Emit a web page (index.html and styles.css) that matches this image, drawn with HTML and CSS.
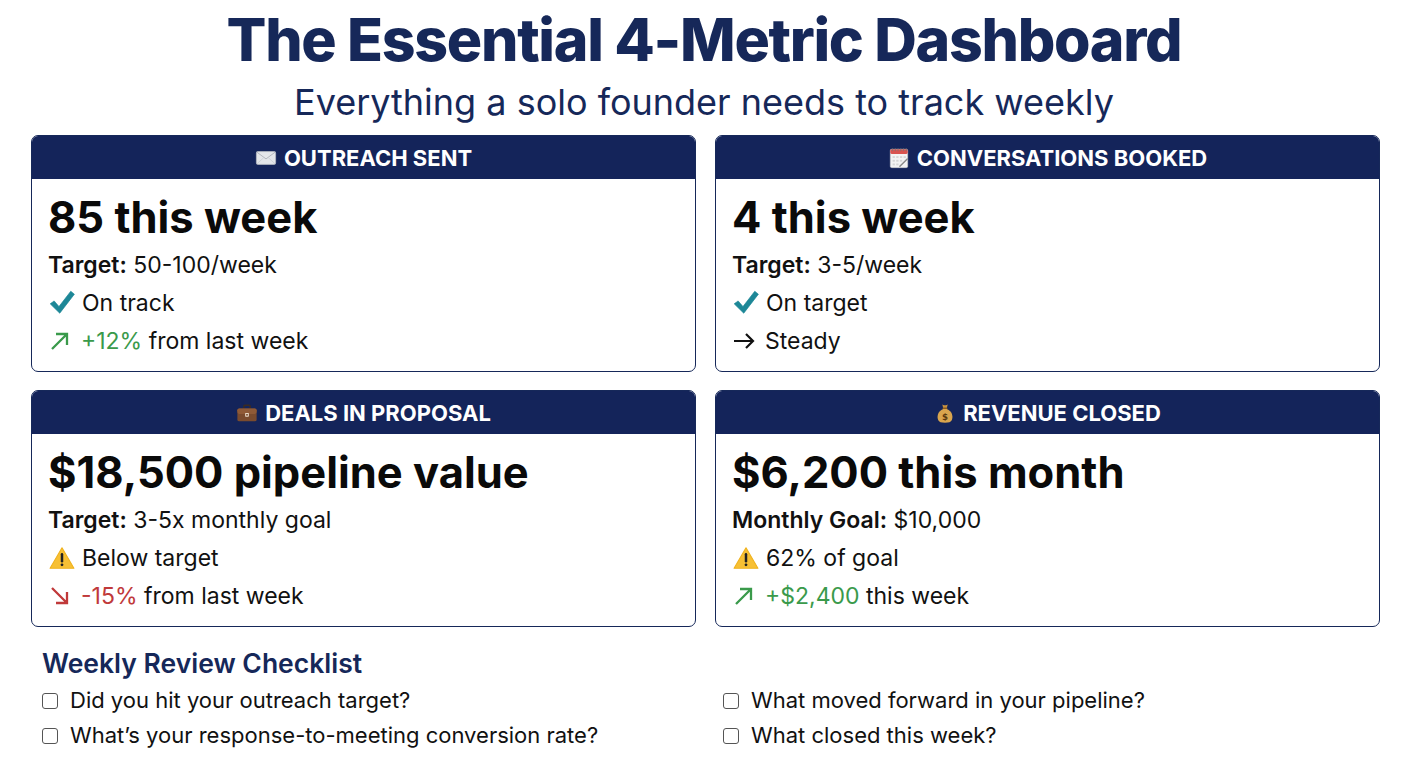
FILE: index.html
```html
<!DOCTYPE html>
<html lang="en">
<head>
<meta charset="utf-8">
<title>The Essential 4-Metric Dashboard</title>
<link rel="stylesheet" href="styles.css">
</head>
<body>
<header class="intro">
  <h1 class="title">The Essential 4-Metric Dashboard</h1>
  <p class="subtitle">Everything a solo founder needs to track weekly</p>
</header>
<main class="page">
  <section class="grid">
    <article class="card">
      <div class="card-head">
        <svg class="emo" viewBox="0 0 24 24" aria-hidden="true"><rect x="1.5" y="5" width="21" height="14" rx="1.5" fill="#e4e6ea" stroke="#b9bdc4" stroke-width="0.8"/><path d="M2 5.6 L12 13 L22 5.6" fill="none" stroke="#a9adb5" stroke-width="0.9"/><path d="M2 18.5 L9.5 11.6 M22 18.5 L14.5 11.6" fill="none" stroke="#c4c8ce" stroke-width="0.7"/></svg>
        <span>OUTREACH SENT</span>
      </div>
      <div class="card-body">
        <div class="value">85 this week</div>
        <div class="line"><b>Target:</b> 50-100/week</div>
        <div class="line"><svg class="ico check" viewBox="0 0 24 24" aria-hidden="true"><path d="M1.5 13.2 L5 10.6 L9.3 15.6 L19.8 2 L23 4.6 L10 21.5 Z" fill="#1d8797" stroke="#1d8797" stroke-width="0.6" stroke-linejoin="round"/></svg>On track</div>
        <div class="line"><svg class="ico arrow" viewBox="0 0 24 24" aria-hidden="true"><path d="M4 20 L19 5 M8 5 H19 V16" fill="none" stroke="#3a9a4b" stroke-width="2.3"/></svg><span class="up">+12%</span> from last week</div>
      </div>
    </article>
    <article class="card">
      <div class="card-head">
        <svg class="emo" viewBox="0 0 24 24" aria-hidden="true"><rect x="2.5" y="2.5" width="19" height="20" rx="1.5" fill="#f3f3f3" stroke="#c9c9c9" stroke-width="0.6"/><rect x="2.5" y="2.5" width="19" height="5" rx="1.5" fill="#d9534f"/><g stroke="#777" stroke-width="0.9"><path d="M5 1.5v3M8 1.5v3M11 1.5v3M14 1.5v3M17 1.5v3M20 1.5v3"/></g><g fill="#d6d6d6"><rect x="5" y="10" width="2.5" height="2"/><rect x="9" y="10" width="2.5" height="2"/><rect x="13" y="10" width="2.5" height="2"/><rect x="17" y="10" width="2.5" height="2"/><rect x="5" y="14" width="2.5" height="2"/><rect x="9" y="14" width="2.5" height="2"/><rect x="13" y="14" width="2.5" height="2"/><rect x="5" y="18" width="2.5" height="2"/><rect x="9" y="18" width="2.5" height="2"/></g><path d="M13 21 L21 13" stroke="#8a8a8a" stroke-width="1.6" stroke-linecap="round"/></svg>
        <span>CONVERSATIONS BOOKED</span>
      </div>
      <div class="card-body">
        <div class="value">4 this week</div>
        <div class="line"><b>Target:</b> 3-5/week</div>
        <div class="line"><svg class="ico check" viewBox="0 0 24 24" aria-hidden="true"><path d="M1.5 13.2 L5 10.6 L9.3 15.6 L19.8 2 L23 4.6 L10 21.5 Z" fill="#1d8797" stroke="#1d8797" stroke-width="0.6" stroke-linejoin="round"/></svg>On target</div>
        <div class="line"><svg class="ico arrow" viewBox="0 0 24 24" aria-hidden="true"><path d="M2 12 H21 M14 5 L21 12 L14 19" fill="none" stroke="#111" stroke-width="2.2"/></svg>Steady</div>
      </div>
    </article>
    <article class="card">
      <div class="card-head">
        <svg class="emo" viewBox="0 0 24 24" aria-hidden="true"><path d="M8.5 7V4.8C8.5 4 9 3.5 9.8 3.5h4.4c.8 0 1.3.5 1.3 1.3V7" fill="none" stroke="#3b2a20" stroke-width="1.6"/><rect x="1.5" y="7" width="21" height="14" rx="2" fill="#7a4b2e"/><rect x="1.5" y="7" width="21" height="6" rx="2" fill="#8f5a37"/><rect x="10" y="12" width="4" height="4" rx="0.6" fill="#e9d9c7"/><rect x="11" y="13.2" width="2" height="1.6" fill="#7a4b2e"/></svg>
        <span>DEALS IN PROPOSAL</span>
      </div>
      <div class="card-body">
        <div class="value">$18,500 pipeline value</div>
        <div class="line"><b>Target:</b> 3-5x monthly goal</div>
        <div class="line"><svg class="ico warn" viewBox="0 0 24 24" aria-hidden="true"><path d="M12 2.5 L23 21.5 H1 Z" fill="#f7c034" stroke="#f0b21d" stroke-width="1" stroke-linejoin="round"/><path d="M12 8.5 V15" stroke="#222" stroke-width="2.3" stroke-linecap="round"/><circle cx="12" cy="18.3" r="1.3" fill="#222"/></svg>Below target</div>
        <div class="line"><svg class="ico arrow" viewBox="0 0 24 24" aria-hidden="true"><path d="M4 4 L19 19 M8 19 H19 V8" fill="none" stroke="#c0393a" stroke-width="2.3"/></svg><span class="down">-15%</span> from last week</div>
      </div>
    </article>
    <article class="card">
      <div class="card-head">
        <svg class="emo" viewBox="0 0 24 24" aria-hidden="true"><path d="M9 2.5 C10 4 14 4 15 2.5 L14 6.5 H10 Z" fill="#c9923f"/><rect x="9.3" y="6" width="5.4" height="1.6" rx="0.8" fill="#8a5a1e"/><path d="M10 7.6 C4 10 3 16 4.5 19.5 C5.5 21.8 8 22.5 12 22.5 C16 22.5 18.5 21.8 19.5 19.5 C21 16 20 10 14 7.6 Z" fill="#d9a54e"/><text x="12" y="19.3" text-anchor="middle" font-family="DejaVu Sans, sans-serif" font-size="9.5" font-weight="bold" fill="#5a3a10">$</text></svg>
        <span>REVENUE CLOSED</span>
      </div>
      <div class="card-body">
        <div class="value">$6,200 this month</div>
        <div class="line"><b>Monthly Goal:</b> $10,000</div>
        <div class="line"><svg class="ico warn" viewBox="0 0 24 24" aria-hidden="true"><path d="M12 2.5 L23 21.5 H1 Z" fill="#f7c034" stroke="#f0b21d" stroke-width="1" stroke-linejoin="round"/><path d="M12 8.5 V15" stroke="#222" stroke-width="2.3" stroke-linecap="round"/><circle cx="12" cy="18.3" r="1.3" fill="#222"/></svg>62% of goal</div>
        <div class="line"><svg class="ico arrow" viewBox="0 0 24 24" aria-hidden="true"><path d="M4 20 L19 5 M8 5 H19 V16" fill="none" stroke="#3a9a4b" stroke-width="2.3"/></svg><span class="up">+$2,400</span> this week</div>
      </div>
    </article>
  </section>
  <section class="checklist">
    <h2 class="check-title">Weekly Review Checklist</h2>
    <ul class="check-grid">
      <li class="item"><span class="box"></span>Did you hit your outreach target?</li>
      <li class="item"><span class="box"></span>What moved forward in your pipeline?</li>
      <li class="item"><span class="box"></span>What’s your response-to-meeting conversion rate?</li>
      <li class="item"><span class="box"></span>What closed this week?</li>
    </ul>
  </section>
</main>
</body>
</html>
```

FILE: styles.css
```css
* { box-sizing: border-box; }
html, body { margin: 0; padding: 0; background: #ffffff; }
body {
  font-family: Inter, "Noto Sans", "Liberation Sans", sans-serif;
  color: #111111;
  width: 1408px;
  height: 768px;
  overflow: hidden;
}
.intro { text-align: center; padding-top: 2px; }
.title {
  margin: 0;
  font-size: 59px;
  line-height: 76px;
  font-weight: 800;
  color: #162859;
  letter-spacing: -1.3px;
}
.subtitle {
  margin: 3px 0 0;
  font-size: 36px;
  line-height: 43px;
  font-weight: 400;
  color: #162859;
}
.page { padding: 11px 28px 0 31px; }
.grid {
  display: grid;
  grid-template-columns: 1fr 1fr;
  column-gap: 19px;
  row-gap: 18px;
}
.card {
  border: 1.5px solid #162859;
  border-radius: 7px;
  overflow: hidden;
  background: #fff;
}
.card-head {
  height: 43px;
  background: #14245a;
  color: #ffffff;
  display: flex;
  align-items: center;
  justify-content: center;
  gap: 7px;
  font-size: 22px;
  font-weight: 700;
}
.emo { width: 22px; height: 22px; flex: none; }
.card-body { padding: 14px 16px 11px; }
.value {
  font-size: 43.5px;
  line-height: 48px;
  font-weight: 700;
  color: #0a0a0a;
  margin-bottom: 5px;
}
.line {
  font-size: 23px;
  line-height: 38px;
  height: 38px;
  white-space: nowrap;
}
.line b { font-weight: 600; }
.ico {
  display: inline-block;
  vertical-align: middle;
  margin-right: 6px;
  position: relative;
  top: -2px;
}
.check { width: 28px; height: 27px; }
.warn { width: 28px; height: 26px; margin-right: 6px; }
.arrow { width: 24px; height: 24px; margin-right: 9px; }
.up { color: #3a9a4b; }
.down { color: #c0393a; }
.checklist { padding: 20px 0 0 11px; }
.check-title {
  margin: 0;
  font-size: 26.5px;
  line-height: 32px;
  font-weight: 600;
  color: #162859;
}
.check-grid {
  list-style: none;
  margin: 4px 0 0;
  padding: 0;
  display: grid;
  grid-template-columns: 1fr 1fr;
  column-gap: 24px;
}
.item {
  font-size: 22px;
  line-height: 35px;
  display: flex;
  align-items: center;
  gap: 12px;
  color: #111;
}
.box {
  width: 16px;
  height: 16px;
  border: 1.5px solid #555;
  border-radius: 3px;
  flex: none;
}
```
